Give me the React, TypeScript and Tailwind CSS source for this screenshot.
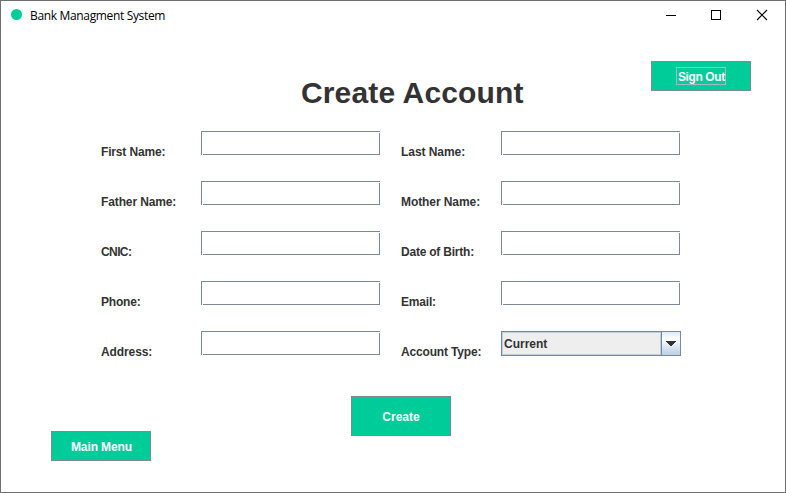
import React from "react";

function TextField({ label }: { label: string }) {
  return (
    <input
      aria-label={label}
      className="block h-6 w-full border border-[#7a8a99] bg-white px-1 text-xs outline-none"
    />
  );
}

function Field({ label, select, tracking = "" }: { label: string; select?: boolean; tracking?: string }) {
  return (
    <div className="flex h-[25px] w-[280px]">
      <label className={`w-[100px] shrink-0 whitespace-nowrap pt-[13px] leading-4 ${tracking}`}>{label}</label>
      {select ? (
        <AccountType />
      ) : (
        <div className="relative h-6 w-[179px]">
          <TextField label={label} />
          <i className="absolute right-0 top-px size-px bg-white" />
          <i className="absolute bottom-0 left-px size-px bg-white" />
        </div>
      )}
    </div>
  );
}

function AccountType() {
  return (
    <div className="flex h-[25px] w-[180px] border border-[#7a8a99]">
      <div className="flex-1 border border-[#b8cfe5] bg-[#eeeeee] pl-px pt-[3px] leading-4">Current</div>
      <div className="flex w-[19px] items-center justify-center border-l border-[#7a8a99] bg-linear-to-b from-[#dde8f3] via-white via-30% to-[#b8cfe5]">
        <svg width="10" height="5" viewBox="0 0 10 5" fill="#333333" shapeRendering="crispEdges">
          <path d="M0 0h10v1h-1v1h-1v1h-1v1h-1v1h-2v-1h-1v-1h-1v-1h-1v-1h-1z" />
        </svg>
      </div>
    </div>
  );
}

function Button({ children, className }: { children: React.ReactNode; className: string }) {
  return (
    <button
      className={`flex w-[100px] items-center justify-center border border-[#7a8a99] bg-[#00cc99] font-bold leading-4 text-white ${className}`}
    >
      {children}
    </button>
  );
}

export default function App() {
  return (
    <div className="flex h-[493px] w-[786px] flex-col overflow-hidden border border-[#707070] bg-white font-['Liberation_Sans',Arial,sans-serif] text-xs font-bold text-[#333333]">
      <header className="flex h-[30px] shrink-0 items-center justify-between font-normal text-black">
        <div className="flex items-center pl-[10px]">
          <svg width="11" height="11" viewBox="0 0 11 11" className="-mt-[3px]">
            <circle cx="5.5" cy="5.5" r="5.5" fill="#00cc99" />
          </svg>
          <h2 className="ml-2 whitespace-nowrap font-['Open_Sans','Noto_Sans',sans-serif] text-xs leading-4 tracking-[-0.34px]">
            Bank Managment System
          </h2>
        </div>
        <svg width="120" height="30" viewBox="665 1 120 30" fill="none" stroke="#000" shapeRendering="crispEdges">
          <path d="M666 15.5h10M711.5 10.5h9v9h-9z" />
          <path d="M757 10l10 10M767 10l-10 10" shapeRendering="geometricPrecision" strokeWidth="1.1" />
        </svg>
      </header>
      <main className="flex flex-1 flex-col">
        <div className="flex h-[100px] justify-between pr-[34px] pt-[30px]">
          <h1 className="ml-[300px] mt-[14px] h-9 whitespace-nowrap text-[30px] leading-9 tracking-[0.14px]">
            Create Account
          </h1>
          <Button className="h-[30px]">
            <span className="h-[18px] w-[50px] whitespace-nowrap border border-[#a3b8cc] pl-px pt-px text-left leading-[17px] tracking-[-0.4px]">
              Sign Out
            </span>
          </Button>
        </div>
        <form className="ml-[100px] grid grid-cols-[280px_280px] gap-x-5 gap-y-[25px]">
          <Field label="First Name:" tracking="tracking-[-0.16px]" />
          <Field label="Last Name:" tracking="tracking-[-0.05px]" />
          <Field label="Father Name:" tracking="tracking-[-0.12px]" />
          <Field label="Mother Name:" tracking="tracking-[-0.08px]" />
          <Field label="CNIC:" tracking="tracking-[-0.6px]" />
          <Field label="Date of Birth:" tracking="tracking-[-0.22px]" />
          <Field label="Phone:" tracking="tracking-[-0.2px]" />
          <Field label="Email:" tracking="tracking-[-0.2px]" />
          <Field label="Address:" tracking="tracking-[-0.1px]" />
          <Field label="Account Type:" select tracking="tracking-[-0.16px]" />
        </form>
        <div className="mt-10 flex h-[65px] pl-[50px]">
          <Button className="h-[30px] self-end pl-px pt-px tracking-[-0.1px]">Main Menu</Button>
          <Button className="ml-[200px] h-10 pt-px">Create</Button>
        </div>
      </main>
    </div>
  );
}
